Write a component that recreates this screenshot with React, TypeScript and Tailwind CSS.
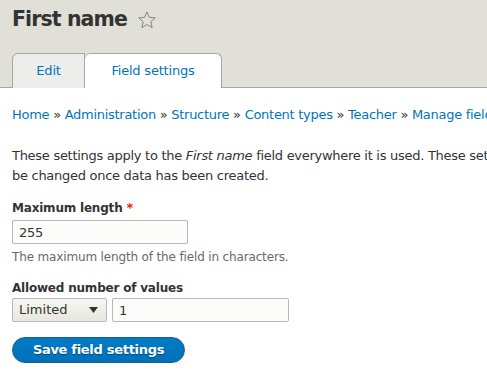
export default function App() {
  const font = { fontFamily: '"DejaVu Sans", "Lucida Grande", sans-serif' }
  return (
    <div className="w-[487px] h-[378px] overflow-hidden bg-white text-[#333]" style={font}>
      <header className="h-[88px] bg-[#e0e0d8] border-b border-[#a6a7a2] px-3 flex flex-col">
        <h1 className="flex items-center gap-[10px] pt-[4px] h-[34px] text-[20.5px] font-bold text-[#333] tracking-[-0.9px]">
          <span>First name</span>
          <svg width="20" height="20" viewBox="0 0 24 24" className="mt-[1px]">
            <path
              d="M12 2.3l2.9 6.5 7 .7-5.3 4.7 1.6 6.9L12 17.5l-6.2 3.6 1.6-6.9-5.3-4.7 7-.7z"
              fill="none"
              stroke="#85857a"
              strokeWidth="1.2"
              strokeLinejoin="round"
            />
          </svg>
        </h1>
        <nav className="mt-auto flex items-end -mb-px text-[13px] tracking-[-0.2px]">
          <a className="w-[73px] h-[35px] flex items-center justify-center bg-[#ededeb] border border-b-0 border-[#a6a7a2] rounded-tl-[6px] text-[#0074bd]">
            Edit
          </a>
          <a className="w-[137px] h-[35px] flex items-center justify-center bg-white border border-b-0 border-l-0 border-[#a6a7a2] rounded-t-[6px] text-[#0074bd]">
            Field settings
          </a>
        </nav>
      </header>

      <main className="px-3 text-[13px] tracking-[-0.28px]">
        <div className="mt-[17px] whitespace-nowrap text-[#0074bd] leading-[20px]">
          Home <span className="text-[#333]">»</span> Administration <span className="text-[#333]">»</span> Structure{" "}
          <span className="text-[#333]">»</span> Content types <span className="text-[#333]">»</span> Teacher{" "}
          <span className="text-[#333]">»</span> Manage fields
        </div>

        <p className="mt-[21px] leading-[20px] whitespace-nowrap">
          These settings apply to the <em>First name</em> field everywhere it is used. These settings impact the way
          that data is stored in the database and cannot
          <br />
          be changed once data has been created.
        </p>

        <div className="mt-[12px]">
          <label className="block font-bold leading-[20px] text-[12px] tracking-[-0.2px]">
            Maximum length <span className="text-[#e62600] text-[13px]">*</span>
          </label>
          <input
            defaultValue="255"
            className="block mt-[2px] w-[176px] h-[24px] px-[6px] border border-[#b8b8b8] bg-[#fcfcfa] rounded-[2px] text-[13px] text-[#333] outline-none"
          />
          <div className="mt-[3px] text-[12px] tracking-[-0.15px] text-[#68696b] leading-[20px]">
            The maximum length of the field in characters.
          </div>
        </div>

        <div className="mt-[11px]">
          <label className="block font-bold leading-[20px] text-[12px] tracking-[-0.2px]">Allowed number of values</label>
          <div className="flex gap-[5px]">
            <div className="w-[95px] h-[24px] flex items-center justify-between pl-[6px] pr-[8px] border border-[#b8b8b8] bg-gradient-to-b from-[#f6f6f3] to-[#e7e7df] rounded-[2px] tracking-normal">
              <span>Limited</span>
              <svg width="9" height="6" viewBox="0 0 9 6">
                <path d="M0 0h9L4.5 6z" fill="#333" />
              </svg>
            </div>
            <input
              defaultValue="1"
              className="w-[177px] h-[24px] px-[6px] border border-[#b8b8b8] bg-[#fcfcfa] rounded-[2px] text-[13px] text-[#333] outline-none"
            />
          </div>
        </div>

        <button className="mt-[15px] w-[173px] h-[26px] rounded-full bg-gradient-to-b from-[#007bc6] to-[#0071b8] border border-[#1e5c90] text-white font-bold text-[13px] tracking-[-0.3px] [text-shadow:0_1px_1px_rgba(0,0,0,0.4)]">
          Save field settings
        </button>
      </main>
    </div>
  )
}
